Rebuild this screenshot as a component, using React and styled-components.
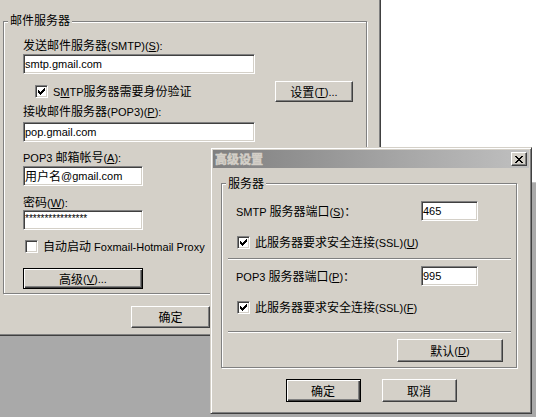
import React from "react";
import styled, { createGlobalStyle, css } from "styled-components";

const face = "#d4d0c8";
const shadow = "#808080";
const dark = "#404040";

const GlobalStyle = createGlobalStyle`
  html, body {
    margin: 0;
    padding: 0;
  }
  body {
    overflow: hidden;
    background: #a9a9a9;
  }
  #root {
    width: 536px;
    height: 417px;
  }
`;

const Desktop = styled.div`
  position: relative;
  width: 536px;
  height: 417px;
  overflow: hidden;
  background: #a9a9a9;
  font-family: "Noto Sans CJK SC", "Liberation Sans", sans-serif;
  font-size: 12px;
  line-height: 14px;
  color: #000;
  white-space: nowrap;
`;

const BackPane = styled.div`
  position: absolute;
  left: 381px;
  top: 0;
  right: 0;
  height: 182px;
  background: #fff;
  border-bottom: 1px solid #c4c4c4;
`;

const Window = styled.div`
  position: absolute;
  box-sizing: border-box;
  display: flex;
  flex-direction: column;
  background: ${face};
  border: 1px solid;
  border-color: ${face} ${dark} ${dark} ${face};
  box-shadow: inset 1px 1px #fff, inset -1px -1px ${shadow};
`;

const MainWindow = styled(Window)`
  left: -4px;
  top: -4px;
  width: 385px;
  height: 340px;
  padding: 24px 0 0 6px;
`;

const Dialog = styled(Window)`
  left: 210px;
  top: 147px;
  width: 322px;
  height: 267px;
  padding: 2px;
`;

const TitleBar = styled.div`
  display: flex;
  align-items: center;
  height: 18px;
  padding: 0 2px;
  background: linear-gradient(to right, #808080, #c0c0c0);
`;

const TitleText = styled.span`
  font-weight: 700;
  line-height: 18px;
  color: ${face};
  -webkit-text-stroke: 0.5px ${face};
`;

const raised = css`
  border: 1px solid;
  border-color: #fff ${dark} ${dark} #fff;
  box-shadow: inset -1px -1px ${shadow};
`;

const CloseButton = styled.div`
  box-sizing: border-box;
  display: flex;
  align-items: center;
  justify-content: center;
  width: 16px;
  height: 14px;
  margin-left: auto;
  padding-right: 1px;
  background: ${face};
  ${raised}
`;

const GroupBox = styled.div`
  box-sizing: border-box;
  display: flex;
  flex-direction: column;
  width: ${(p) => p.$w}px;
  height: ${(p) => p.$h}px;
  border: 1px solid ${shadow};
  box-shadow: inset 1px 1px #fff, 1px 1px #fff;
`;

const GroupTitle = styled.div`
  align-self: flex-start;
  margin: ${(p) => -p.$lift}px 0 0 4px;
  padding: 0 2px;
  background: ${face};
`;

const Pane = styled.div`
  display: flex;
  flex-direction: column;
  align-items: flex-start;
  padding-left: ${(p) => p.$left}px;
`;

const FieldLabel = styled.div`
  margin-top: ${(p) => p.$mt}px;
`;

const Edit = styled.div`
  box-sizing: border-box;
  display: flex;
  align-items: center;
  flex: none;
  width: ${(p) => p.$w}px;
  height: 20px;
  margin-top: ${(p) => p.$mt || 0}px;
  padding: 0 1px;
  overflow: hidden;
  background: #fff;
  border: 1px solid;
  border-color: ${shadow} #fff #fff ${shadow};
  box-shadow: inset 1px 1px ${dark}, inset -1px -1px ${face};
`;

const Mask = styled.span`
  font-family: "Liberation Sans", sans-serif;
  font-size: 10px;
  line-height: 10px;
  margin-top: -3px;
`;

const OptionRow = styled.div`
  display: flex;
  align-items: center;
  align-self: stretch;
  gap: 5px;
  margin-top: ${(p) => p.$mt}px;
  padding-left: ${(p) => p.$indent}px;
`;

const PortRow = styled.div`
  display: flex;
  align-items: center;
  margin-top: ${(p) => p.$mt}px;
  padding: 0 38px 0 14px;
`;

const PortLabel = styled.div`
  flex: 1;
`;

const Separator = styled.div`
  width: 283px;
  height: 0;
  margin: ${(p) => p.$mt}px 0 0 6px;
  border-top: 1px solid ${shadow};
  border-bottom: 1px solid #fff;
`;

const Box = styled.div`
  box-sizing: border-box;
  flex: none;
  width: 13px;
  height: 13px;
  padding: 2px;
  background: #fff;
  border: 1px solid;
  border-color: ${shadow} #fff #fff ${shadow};
  box-shadow: inset 1px 1px ${dark}, inset -1px -1px ${face};

  svg {
    display: block;
  }
`;

const Button = styled.button`
  appearance: none;
  box-sizing: border-box;
  display: flex;
  align-items: center;
  justify-content: center;
  flex: none;
  width: ${(p) => p.$w}px;
  height: ${(p) => p.$h}px;
  margin: ${(p) => p.$mt || 0}px 0 0;
  padding: 0;
  font: inherit;
  line-height: 14px;
  color: #000;
  background: ${face};
  ${(p) =>
    p.$default
      ? css`
          border: 1px solid #000;
          box-shadow: inset 1px 1px #fff, inset -1px -1px ${dark},
            inset -2px -2px ${shadow};
        `
      : raised}
`;

const SideButton = styled(Button)`
  margin-left: auto;
  margin-right: 13px;
`;

const GroupActions = styled.div`
  display: flex;
  justify-content: flex-end;
  margin-top: 6px;
  padding-right: 13px;
`;

const MainFooter = styled.div`
  display: flex;
  margin-top: 12px;
  padding-left: 128px;
`;

const DialogBody = styled.div`
  margin-top: 15px;
  padding-left: 8px;
`;

const ButtonBar = styled.div`
  display: flex;
  justify-content: center;
  gap: 21px;
  margin-top: 11px;
`;

const Lat = styled.span`
  font-family: "Liberation Sans", sans-serif;
  font-size: 11px;
`;

const Key = styled(Lat)`
  text-decoration: underline;
  text-underline-offset: 1px;
`;

const CJK = /[\u2e80-\u9fff\u3000-\u303f\uff00-\uffef]/;

// "&" marks the access key, like a Windows resource string
function rich(text) {
  const out = [];
  let buf = "";
  let latin = null;
  const flush = () => {
    if (!buf) return;
    out.push(latin ? <Lat key={out.length}>{buf}</Lat> : <span key={out.length}>{buf}</span>);
    buf = "";
  };
  for (let i = 0; i < text.length; i++) {
    const ch = text[i];
    if (ch === "&") {
      flush();
      out.push(<Key key={out.length}>{text[i + 1]}</Key>);
      i++;
      latin = null;
      continue;
    }
    const isLatin = !CJK.test(ch);
    if (isLatin !== latin) {
      flush();
      latin = isLatin;
    }
    buf += ch;
  }
  flush();
  return out;
}

const checkPath =
  "M0 2h1v3H0z M1 3h1v3H1z M2 4h1v3H2z M3 3h1v3H3z M4 2h1v3H4z M5 1h1v3H5z M6 0h1v3H6z";

const closePath =
  "M0 0h2v1H0z M6 0h2v1H6z M1 1h2v1H1z M5 1h2v1H5z M2 2h4v1H2z M3 3h2v1H3z M2 4h4v1H2z M1 5h2v1H1z M5 5h2v1H5z M0 6h2v1H0z M6 6h2v1H6z";

const CheckBox = ({ checked }) => (
  <Box>
    {checked && (
      <svg width="7" height="7" viewBox="0 0 7 7" shapeRendering="crispEdges">
        <path d={checkPath} fill="#000" />
      </svg>
    )}
  </Box>
);

const App = () => {
  return (
    <Desktop>
      <GlobalStyle />
      <BackPane />

      <MainWindow>
        <GroupBox $w={364} $h={273}>
          <GroupTitle $lift={9}>邮件服务器</GroupTitle>
          <Pane $left={19}>
            <FieldLabel $mt={11}>{rich("发送邮件服务器(SMTP)(&S):")}</FieldLabel>
            <Edit $w={232} $mt={1}>{rich("smtp.gmail.com")}</Edit>
            <OptionRow $mt={7} $indent={12}>
              <CheckBox checked />
              <span>{rich("S&MTP服务器需要身份验证")}</span>
              <SideButton $w={78} $h={21}>{rich("设置(&T)...")}</SideButton>
            </OptionRow>
            <FieldLabel $mt={2}>{rich("接收邮件服务器(POP3)(&P):")}</FieldLabel>
            <Edit $w={232} $mt={3}>{rich("pop.gmail.com")}</Edit>
            <FieldLabel $mt={8}>{rich("POP3 邮箱帐号(&A):")}</FieldLabel>
            <Edit $w={120} $mt={1}>{rich("用户名@gmail.com")}</Edit>
            <FieldLabel $mt={9}>{rich("密码(&W):")}</FieldLabel>
            <Edit $w={120}>
              <Mask>{"*".repeat(16)}</Mask>
            </Edit>
            <OptionRow $mt={9} $indent={2}>
              <CheckBox />
              <span>{rich("自动启动 Foxmail-Hotmail Proxy")}</span>
            </OptionRow>
            <Button $w={120} $h={21} $mt={14} $default>
              {rich("高级(&V)...")}
            </Button>
          </Pane>
        </GroupBox>
        <MainFooter>
          <Button $w={79} $h={22}>确定</Button>
        </MainFooter>
      </MainWindow>

      <Dialog>
        <TitleBar>
          <TitleText>高级设置</TitleText>
          <CloseButton>
            <svg width="8" height="7" viewBox="0 0 8 7" shapeRendering="crispEdges">
              <path d={closePath} fill="#000" />
            </svg>
          </CloseButton>
        </TitleBar>
        <DialogBody>
          <GroupBox $w={296} $h={185}>
            <GroupTitle $lift={8}>服务器</GroupTitle>
            <PortRow $mt={11}>
              <PortLabel>{rich("SMTP 服务器端口(&S)：")}</PortLabel>
              <Edit $w={57}>{rich("465")}</Edit>
            </PortRow>
            <OptionRow $mt={14} $indent={15}>
              <CheckBox checked />
              <span>{rich("此服务器要求安全连接(SSL)(&U)")}</span>
            </OptionRow>
            <Separator $mt={8} />
            <PortRow $mt={6}>
              <PortLabel>{rich("POP3 服务器端口(&P)：")}</PortLabel>
              <Edit $w={57}>{rich("995")}</Edit>
            </PortRow>
            <OptionRow $mt={14} $indent={15}>
              <CheckBox checked />
              <span>{rich("此服务器要求安全连接(SSL)(&F)")}</span>
            </OptionRow>
            <Separator $mt={16} />
            <GroupActions>
              <Button $w={106} $h={23}>{rich("默认(&D)")}</Button>
            </GroupActions>
          </GroupBox>
        </DialogBody>
        <ButtonBar>
          <Button $w={75} $h={23} $default>确定</Button>
          <Button $w={75} $h={23}>取消</Button>
        </ButtonBar>
      </Dialog>
    </Desktop>
  );
};

export default App;
